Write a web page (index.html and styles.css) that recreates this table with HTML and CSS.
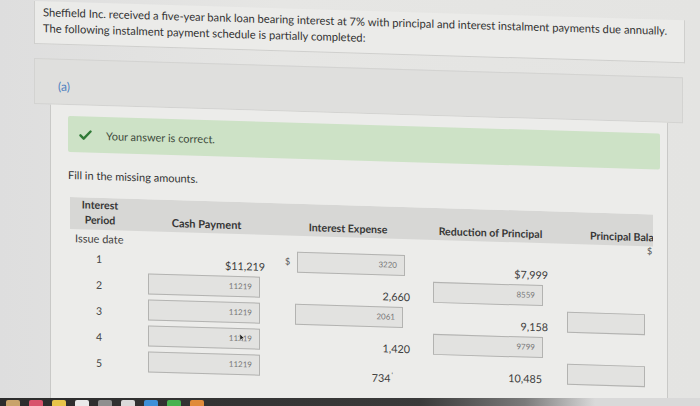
FILE: index.html
```html
<!DOCTYPE html>
<html lang="en">
<head>
<meta charset="utf-8">
<title>Instalment payment schedule</title>
<link rel="stylesheet" href="styles.css">
</head>
<body>
<div class="screen">
  <div class="sheet">
    <div class="question">
      <p>Sheffield Inc. received a five-year bank loan bearing interest at 7% with principal and interest instalment payments due annually.</p>
      <p>The following instalment payment schedule is partially completed:</p>
    </div>
    <div class="part-head"><span class="part-label">(a)</span></div>
    <div class="panel">
      <div class="alert">
        <svg class="check" viewBox="0 0 14 12" width="13" height="11"><path d="M1.5 6.5 L5 10 L12.5 2" fill="none" stroke="#2f7a36" stroke-width="2.6" stroke-linecap="round" stroke-linejoin="round"/></svg>
        <span>Your answer is correct.</span>
      </div>
      <p class="instr">Fill in the missing amounts.</p>
      <div class="table">
        <div class="row head">
          <div class="c1 th">Interest<br>Period</div>
          <div class="c2 th">Cash Payment</div>
          <div class="c3 th">Interest Expense</div>
          <div class="c4 th">Reduction of Principal</div>
          <div class="c5 th">Principal Bala</div>
        </div>
        <div class="row issue">
          <div class="c1 per">Issue date</div>
          <div class="c2"></div>
          <div class="c3"></div>
          <div class="c4"></div>
          <div class="c5 bal">$</div>
        </div>
        <div class="row">
          <div class="c1 num">1</div>
          <div class="c2 val">$11,219</div>
          <div class="c3 cell"><span class="dollar">$</span><span class="inp w108">3220</span></div>
          <div class="c4 val">$7,999</div>
          <div class="c5"></div>
        </div>
        <div class="row">
          <div class="c1 num">2</div>
          <div class="c2"><span class="inp w112">11219</span></div>
          <div class="c3 val">2,660</div>
          <div class="c4"><span class="inp w110">8559</span></div>
          <div class="c5"></div>
        </div>
        <div class="row">
          <div class="c1 num">3</div>
          <div class="c2"><span class="inp w112">11219</span></div>
          <div class="c3 cell pad"><span class="inp w108">2061</span></div>
          <div class="c4 val">9,158</div>
          <div class="c5 box"><span class="inp w78"></span></div>
        </div>
        <div class="row">
          <div class="c1 num">4</div>
          <div class="c2"><span class="inp w112">11219<svg class="pointer" viewBox="0 0 8 12" width="6" height="9"><path d="M1 1 L1 10 L3.3 7.8 L5 11 L6.3 10.3 L4.7 7.2 L7.5 7 Z" fill="#222" stroke="#fff" stroke-width="0.8"/></svg></span></div>
          <div class="c3 val">1,420</div>
          <div class="c4"><span class="inp w110">9799</span></div>
          <div class="c5"></div>
        </div>
        <div class="row">
          <div class="c1 num">5</div>
          <div class="c2"><span class="inp w112">11219</span></div>
          <div class="c3 val v734">734<sup>'</sup></div>
          <div class="c4 val v10">10,485</div>
          <div class="c5 box"><span class="inp w78"></span></div>
        </div>
      </div>
    </div>
  </div>
</div>
<div class="dock">
  <span class="app a1"></span><span class="app a2"></span><span class="app a3"></span><span class="app a4"></span><span class="app a5"></span><span class="app a6"></span><span class="app a7"></span><span class="app a8"></span><span class="app a9"></span>
</div>
</body>
</html>
```
FILE: styles.css
```css
* { box-sizing: border-box; }
html, body { margin: 0; padding: 0; }
body {
  width: 700px;
  height: 406px;
  overflow: hidden;
  background: #e3e3e1;
  font-family: Lato, "Open Sans", sans-serif;
  color: #3a3a3a;
}
.screen {
  height: 398px;
  overflow: hidden;
  background: linear-gradient(90deg, #dedede 0, #e6e6e4 40%, #e4e4e2 100%);
}
.sheet {
  transform: skewY(1.7deg);
  transform-origin: 0 0;
  padding-left: 34px;
  width: 700px;
}
.question {
  width: 651px;
  height: 43px;
  padding: 3px 8px 0 8px;
  background: #ebebe9;
  border: 1px solid #cfcfcd;
  border-top: none;
  font-size: 11.2px;
  line-height: 16px;
  color: #333;
}
.question p { margin: 0; white-space: nowrap; }
.part-head {
  margin-top: 14px;
  width: 649px;
  height: 46px;
  background: #dfdfdd;
  border: 1px solid #d3d3d1;
  padding: 15px 0 0 23px;
}
.part-label {
  font-size: 12px;
  color: #4f7fc0;
  line-height: 14px;
}
.panel {
  margin-left: 16px;
  width: 618px;
  height: 330px;
  background: #ececea;
  border-left: 1px solid #c9c9c7;
  border-right: 1px solid #c9c9c7;
  padding: 11px 8px 0 17px;
}
.alert {
  width: 592px;
  height: 36px;
  background: #cde2c6;
  border-radius: 2px;
  display: flex;
  align-items: center;
  padding-left: 11px;
  font-size: 11px;
  color: #3d4a3b;
}
.check { margin-right: 14px; margin-top: 1px; }
.instr {
  margin: 16px 0 0 0;
  font-size: 11px;
  line-height: 14px;
  color: #333;
}
.table {
  margin-top: 15px;
  margin-left: 2px;
  width: 583px;
  overflow: hidden;
}
.row {
  display: grid;
  grid-template-columns: 78px 134px 151px 132px 88px;
  height: 26px;
  align-items: start;
}
.row.head {
  height: 32px;
  background: #d7d7d5;
  align-items: end;
  padding-bottom: 4px;
}
.row.issue { height: 16px; align-items: center; }
.th {
  font-size: 10.6px;
  font-weight: bold;
  line-height: 14px;
  color: #363636;
  text-align: center;
  white-space: nowrap;
}
.row.head .c1 { padding-right: 18px; line-height: 15px; }
.row.head .c2 { padding-right: 17px; font-size: 11px; }
.row.head .c3 { padding-right: 23px; padding-left: 4px; }
.row.head .c4 { padding-right: 17px; }
.row.head .c5 { text-align: left; padding-left: 25px; }
.per {
  font-size: 11px;
  color: #444;
  padding-left: 5px;
  white-space: nowrap;
}
.row.issue .bal {
  font-size: 9px;
  line-height: 12px;
  color: #555;
  padding-left: 82px;
  margin-top: -6px;
}
.num {
  font-size: 10.5px;
  color: #444;
  text-align: center;
  padding-right: 20px;
  padding-top: 6px;
  line-height: 14px;
}
.val {
  font-size: 10.8px;
  color: #3c3c3c;
  text-align: right;
  padding-top: 9px;
  line-height: 14px;
}
.c2.val { padding-right: 17px; }
.c3.val { padding-right: 23px; }
.c4.val { padding-right: 17px; }
.c3.val.v734 { padding-right: 40px; }
.v734 sup { font-size: 7px; margin-left: 1px; }
.c4.val.v10 { padding-right: 23px; }
.cell { display: flex; align-items: flex-start; }
.cell.pad { padding-left: 13px; }
.box { padding-left: 2px; }
.dollar {
  width: 15px;
  padding-left: 3px;
  padding-top: 3px;
  font-size: 9px;
  color: #555;
  line-height: 14px;
}
.inp {
  position: relative;
  display: block;
  height: 21px;
  background: #e2e2e0;
  border: 1px solid #b3b3b1;
  font-size: 8px;
  line-height: 19px;
  color: #777;
  text-align: right;
  padding-right: 7px;
}
.w112 { width: 112px; }
.w108 { width: 108px; }
.w110 { width: 110px; }
.w78 { width: 78px; }
.pointer {
  position: absolute;
  right: 14px;
  top: 4px;
}
.dock {
  height: 8px;
  background: linear-gradient(90deg, #2c2c2c 0, #3a3a3a 60%, #7a7a7a 75%, #d9d9d9 85%);
  display: flex;
  gap: 9px;
  padding: 2px 0 0 6px;
}
.app { width: 14px; height: 6px; border-radius: 2px 2px 0 0; }
.a1 { background: #c9a36a; }
.a2 { background: #d8536c; }
.a3 { background: #e7c44a; }
.a4 { background: #e9e9e9; }
.a5 { background: #8f8f8f; }
.a6 { background: #d9d9d9; }
.a7 { background: #3d8fd8; }
.a8 { background: #47b24f; }
.a9 { background: #e08a3a; }
```
